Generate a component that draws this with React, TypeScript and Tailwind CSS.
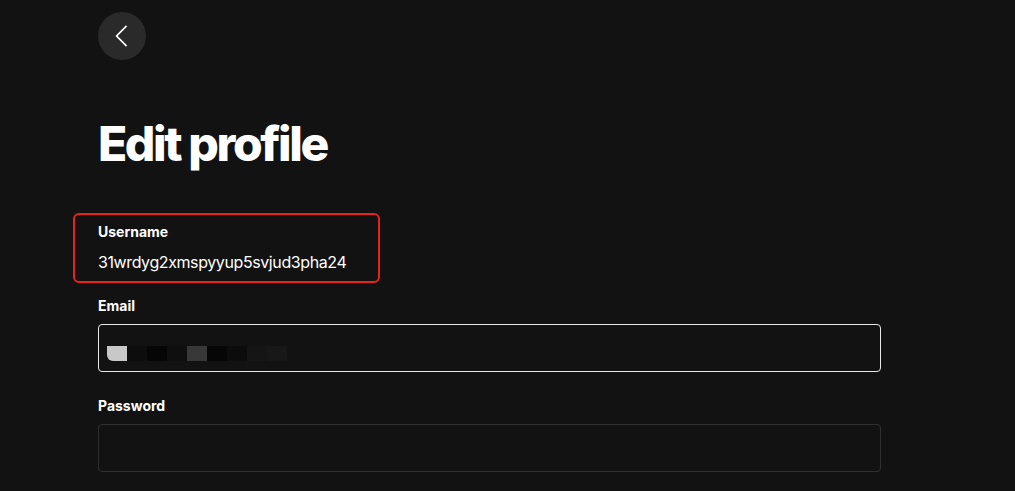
import React from 'react';

const ChevronLeft = ({ className }: { className?: string }) => (
  <svg xmlns="http://www.w3.org/2000/svg" className={className} viewBox="0 0 48 48" fill="none" stroke="currentColor" strokeWidth={1.7}>
    <path strokeLinecap="square" strokeLinejoin="miter" d="M28 14.5L18.6 24L28 33.5" />
  </svg>
);

// pixelated redaction over the email value
const redactBlocks = ['#c8c8c8', '#0d0d0d', '#060606', '#0f0f0f', '#383838', '#060606', '#0c0c0c', '#151515', '#181818'];

const Label = ({ children }: { children: React.ReactNode }) => (
  <div className="text-[14px] leading-[20px] font-bold text-white">{children}</div>
);

export default function App() {
  return (
    <div className="min-h-[491px] w-full bg-[#121212] text-white" style={{ fontFamily: 'Inter, "Noto Sans", sans-serif' }}>
      <div className="pl-[98px] pt-[12px] w-[881px]">
        <button className="w-12 h-12 rounded-full bg-[#2a2a2a] flex items-center justify-center text-white">
          <ChevronLeft className="w-12 h-12" />
        </button>

        <h1 className="mt-[56px] text-[48px] leading-[56px] font-extrabold tracking-[-0.05em]">Edit profile</h1>

        <div className="relative mt-[50px]">
          <Label>Username</Label>
          <div className="mt-[8px] text-[16px] leading-[24px] font-normal tracking-[-0.025em]">31wrdyg2xmspyyup5svjud3pha24</div>
          <div className="absolute top-[-9px] left-[-25px] w-[307px] h-[70px] border-2 border-[#e8231a] rounded-[6px] pointer-events-none" />
        </div>

        <div className="mt-[22px]">
          <Label>Email</Label>
          <div className="mt-[8px] h-[48px] border border-[#e8e8e8] rounded-[4px] flex items-start pt-[21px] pl-[8px]">
            <div className="flex">
              {redactBlocks.map((c, i) => (
                <div key={i} className={i === 0 ? 'w-5 h-[15px] rounded-bl-[6px]' : 'w-5 h-[15px]'} style={{ backgroundColor: c }} />
              ))}
            </div>
          </div>
        </div>

        <div className="mt-[24px]">
          <Label>Password</Label>
          <div className="mt-[8px] h-[48px] border border-[#2f2f2f] rounded-[4px]" />
        </div>
      </div>
    </div>
  );
}
